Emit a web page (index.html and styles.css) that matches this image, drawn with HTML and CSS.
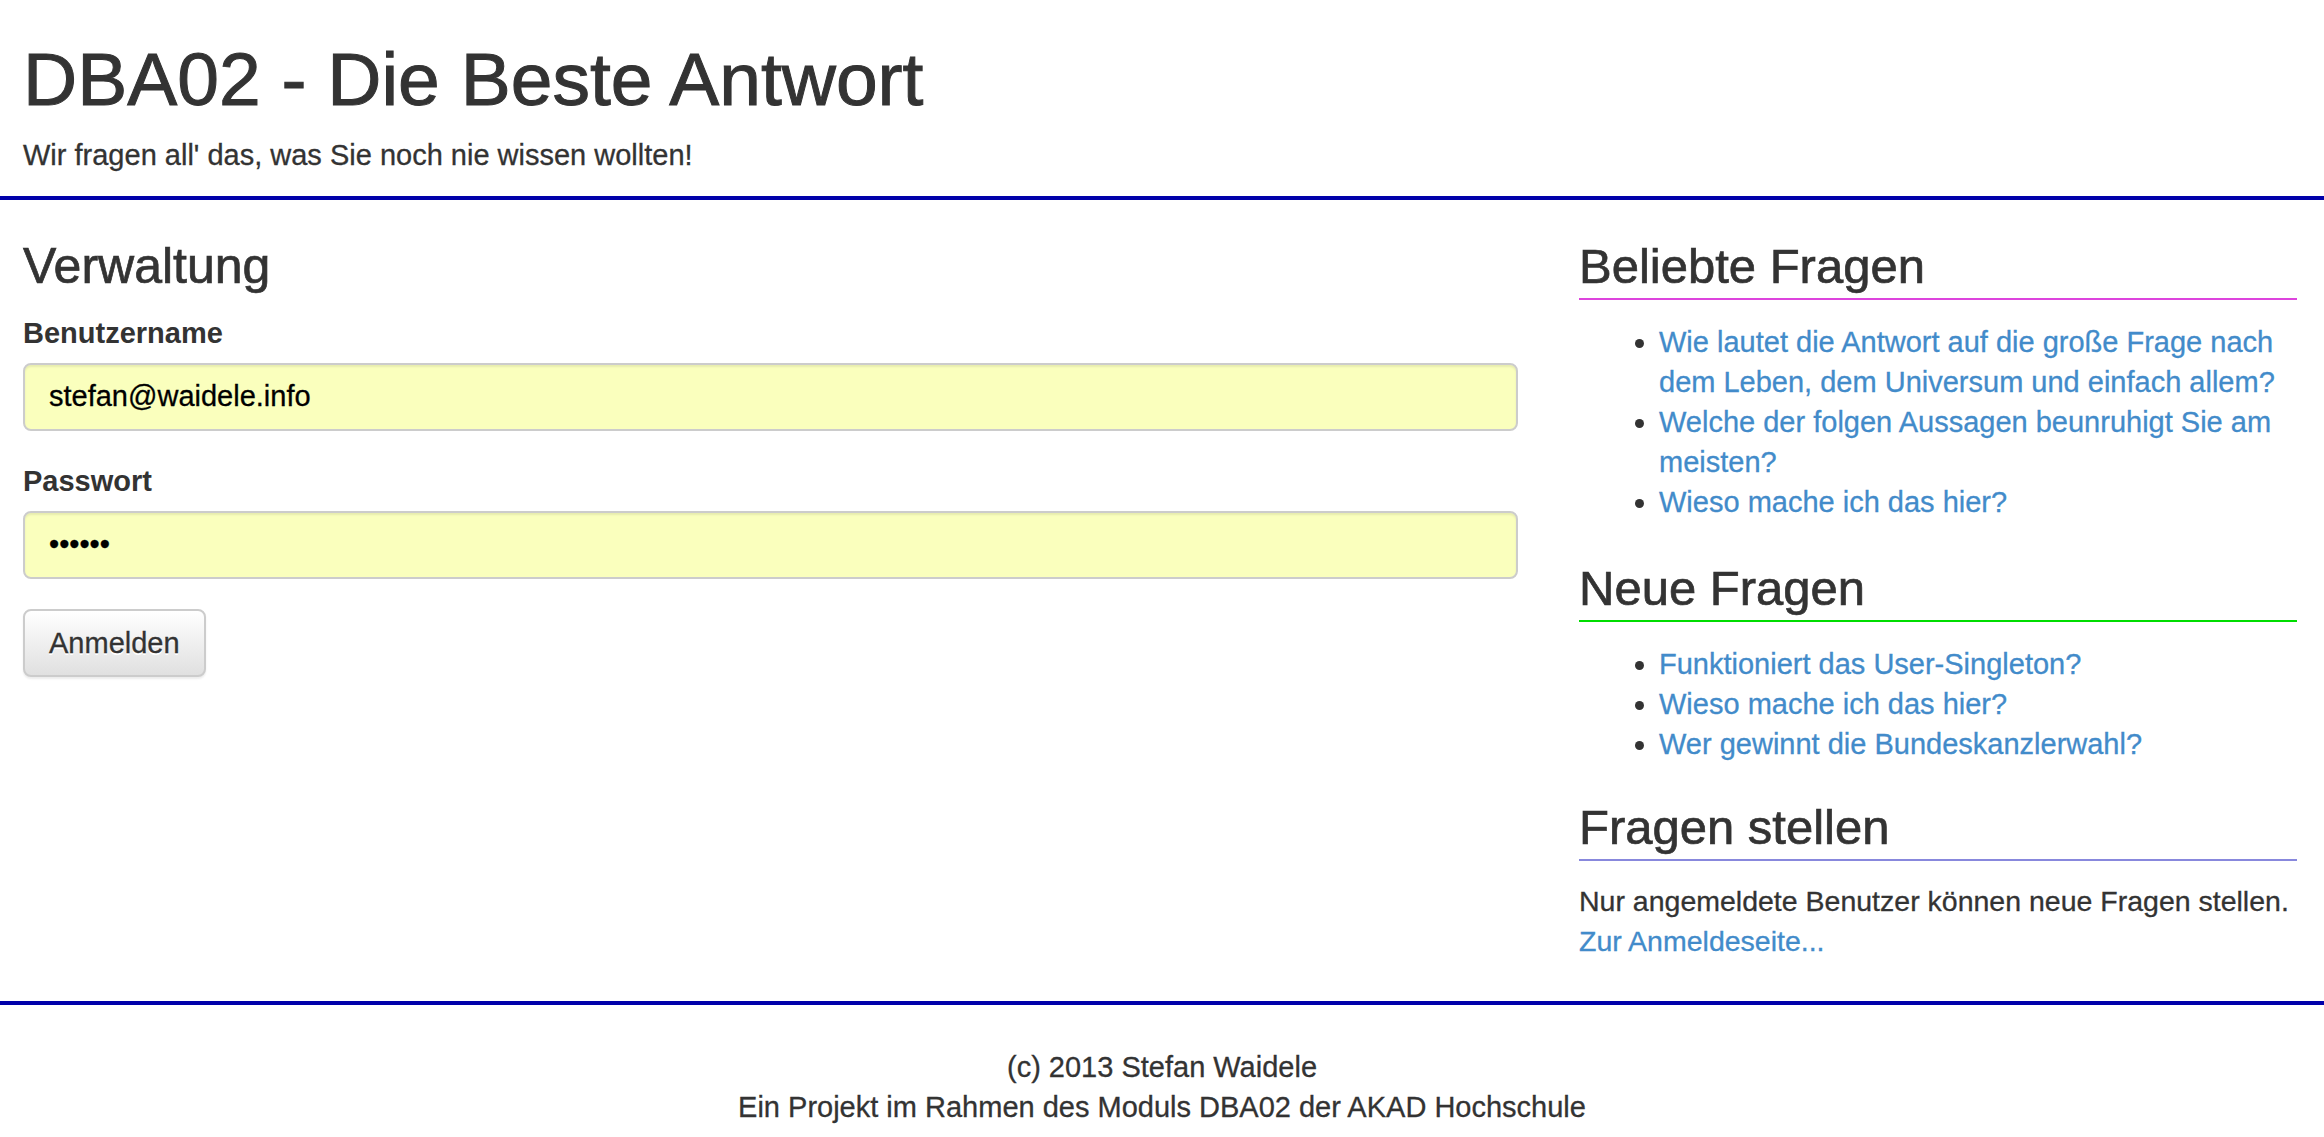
FILE: index.html
```html
<!DOCTYPE html>
<html lang="de">
<head>
<meta charset="utf-8">
<title>DBA02 - Die Beste Antwort</title>
<link rel="stylesheet" href="styles.css">
</head>
<body>
<header class="page-header">
  <h1 class="site-title">DBA02 - Die Beste Antwort</h1>
  <p class="site-lead">Wir fragen all' das, was Sie noch nie wissen wollten!</p>
</header>
<main class="layout">
  <section class="main-col">
    <h3 class="section-title">Verwaltung</h3>
    <form class="login-form">
      <div class="form-group">
        <label class="form-label" for="user">Benutzername</label>
        <input class="form-input" id="user" type="text" value="stefan@waidele.info">
      </div>
      <div class="form-group">
        <label class="form-label" for="pass">Passwort</label>
        <input class="form-input" id="pass" type="password" value="secret">
      </div>
      <button class="btn" type="button">Anmelden</button>
    </form>
  </section>
  <aside class="side-col">
    <h3 class="side-title side-title--popular">Beliebte Fragen</h3>
    <ul class="question-list">
      <li><a href="#">Wie lautet die Antwort auf die große Frage nach dem Leben, dem Universum und einfach allem?</a></li>
      <li><a href="#">Welche der folgen Aussagen beunruhigt Sie am meisten?</a></li>
      <li><a href="#">Wieso mache ich das hier?</a></li>
    </ul>
    <h3 class="side-title side-title--new">Neue Fragen</h3>
    <ul class="question-list">
      <li><a href="#">Funktioniert das User-Singleton?</a></li>
      <li><a href="#">Wieso mache ich das hier?</a></li>
      <li><a href="#">Wer gewinnt die Bundeskanzlerwahl?</a></li>
    </ul>
    <h3 class="side-title side-title--ask">Fragen stellen</h3>
    <p class="side-text">Nur angemeldete Benutzer können neue Fragen stellen.<br><a href="#">Zur Anmeldeseite...</a></p>
  </aside>
</main>
<footer class="page-footer">
  <p>(c) 2013 Stefan Waidele<br>Ein Projekt im Rahmen des Moduls DBA02 der AKAD Hochschule</p>
</footer>
</body>
</html>
```
FILE: styles.css
```css
* { box-sizing: border-box; }

html, body {
  margin: 0;
  padding: 0;
  background: #fff;
}

body {
  font-family: "Liberation Sans", Arial, Helvetica, sans-serif;
  font-size: 29px;
  line-height: 40px;
  color: #333;
  -webkit-text-stroke: 0.3px currentColor;
}

a {
  color: #428bca;
  text-decoration: none;
}

.page-header {
  padding: 0 27px 0 23px;
  border-bottom: 4px solid #0000aa;
}

.site-title {
  margin: 38px 0 14px;
  font-size: 75px;
  line-height: 1.1;
  font-weight: 500;
  -webkit-text-stroke: 1px currentColor;
}

.site-lead {
  margin: 0 0 21px;
}

.layout {
  display: grid;
  grid-template-columns: minmax(0, 1495fr) minmax(0, 718fr);
  column-gap: 61px;
  padding: 0 27px 40px 23px;
  border-bottom: 4px solid #0000aa;
}

.section-title,
.side-title {
  margin: 40px 0 0;
  font-size: 50px;
  line-height: 53px;
  font-weight: 500;
  -webkit-text-stroke: 0.7px currentColor;
}

.side-title {
  font-size: 49px;
}

.section-title {
  margin-bottom: 20px;
}

.side-title {
  padding-bottom: 5px;
  border-bottom: 2px solid #ccc;
}

.side-title--popular { border-bottom-color: #dd44dd; }
.side-title--new { border-bottom-color: #00dd00; }
.side-title--ask {
  margin-top: 37px;
  border-bottom-color: #8888dd;
}

.form-group {
  margin-bottom: 30px;
}

.form-label {
  display: block;
  font-weight: bold;
  margin-bottom: 10px;
  -webkit-text-stroke: 0;
}

.form-input {
  display: block;
  width: 100%;
  height: 68px;
  padding: 12px 24px;
  font-family: inherit;
  font-size: 29px;
  line-height: 40px;
  color: #000;
  background: #faffbd;
  border: 2px solid #ccc;
  border-radius: 8px;
  box-shadow: inset 0 2px 2px rgba(0, 0, 0, .075);
  outline: none;
}

.btn {
  display: inline-block;
  height: 68px;
  padding: 12px 24px;
  font-family: inherit;
  font-size: 29px;
  line-height: 40px;
  color: #333;
  background-image: linear-gradient(to bottom, #fff 0, #e0e0e0 100%);
  border: 2px solid #ccc;
  border-radius: 8px;
  text-shadow: 0 2px 0 #fff;
  box-shadow: inset 0 2px 0 rgba(255, 255, 255, .15), 0 2px 2px rgba(0, 0, 0, .075);
  cursor: pointer;
}

.question-list {
  margin: 22px 0 0;
  padding-left: 80px;
  list-style: disc;
}

.side-text {
  margin: 20px 0 0;
  font-size: 28.5px;
}

.page-footer {
  padding: 42px 0 30px;
  text-align: center;
}

.page-footer p {
  margin: 0;
}
```
